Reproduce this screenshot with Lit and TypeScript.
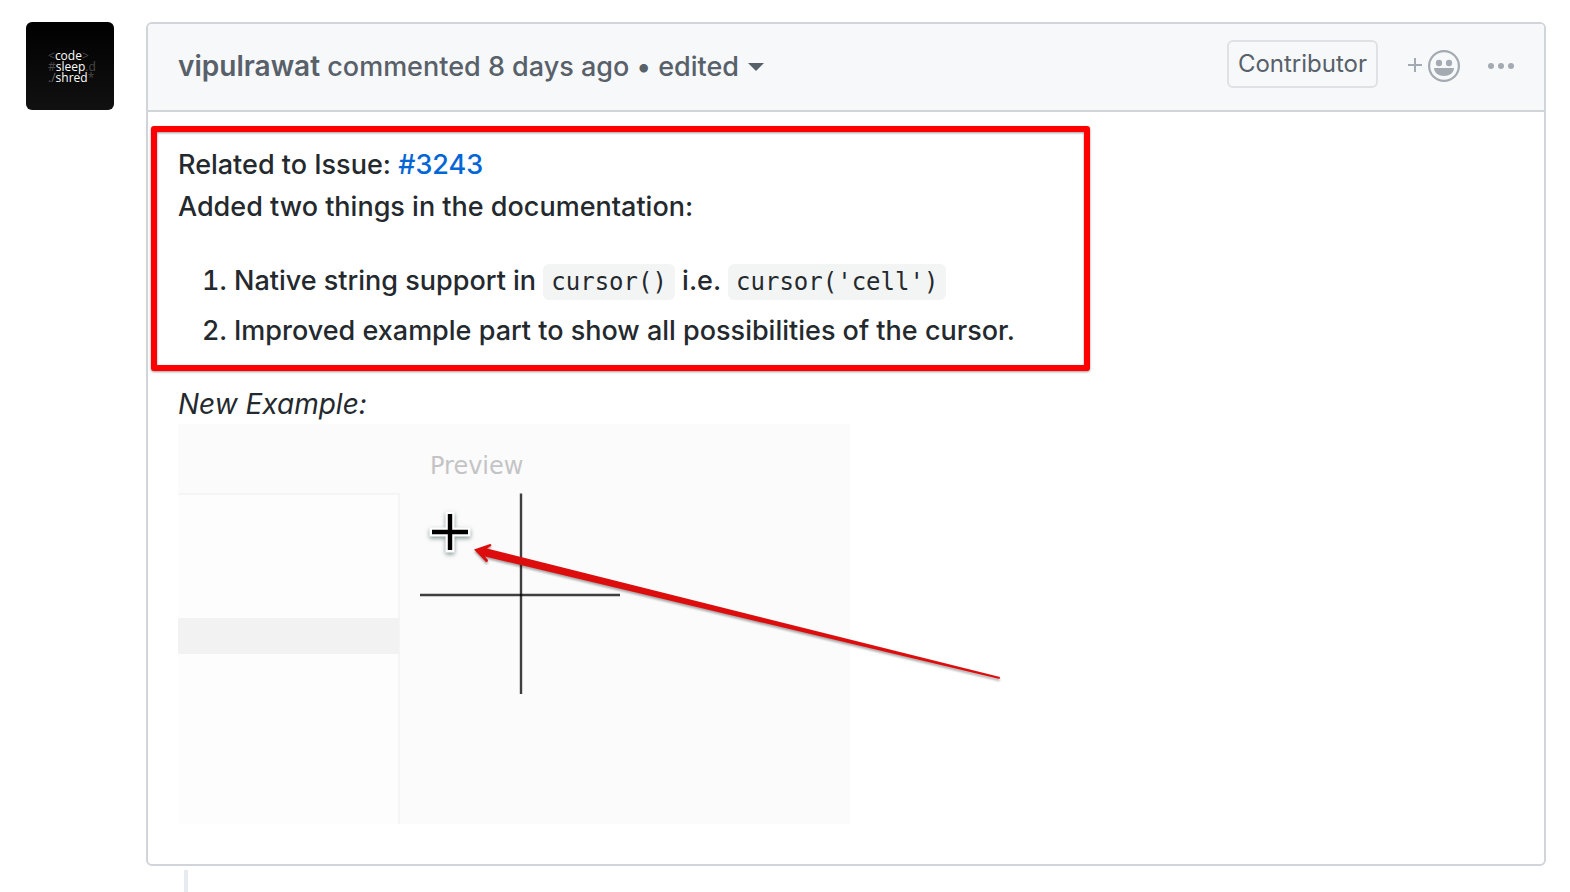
import { LitElement, html, css } from "lit";
import { customElement } from "lit/decorators.js";

@customElement("user-avatar")
class UserAvatar extends LitElement {
  static styles = css`
    :host {
      display: block;
      flex: none;
    }
    .tile {
      display: flex;
      flex-direction: column;
      justify-content: center;
      box-sizing: border-box;
      width: 88px;
      height: 88px;
      padding-left: 22px;
      border-radius: 6px;
      background: linear-gradient(#000, #111);
      color: #fff;
      font: 12px/11px "Open Sans", "Noto Sans", sans-serif;
      text-decoration: none;
      white-space: nowrap;
    }
    .dim {
      color: #484848;
    }
    .slash {
      color: #666;
    }
  `;

  render() {
    return html`
      <a class="tile" href="#vipulrawat" aria-label="vipulrawat">
        <span><span class="dim">&lt;</span>code<span class="dim">&gt;</span></span>
        <span><span class="dim">#</span>sleep<span class="dim">.d</span></span>
        <span><span class="slash">./</span>shred<span class="dim">*</span></span>
      </a>
    `;
  }
}

@customElement("cursor-preview")
class CursorPreview extends LitElement {
  static styles = css`
    :host {
      display: block;
      position: relative;
      max-width: 672px;
    }
    .picture {
      display: block;
      width: 100%;
    }
    .label {
      font: 24px "DejaVu Sans", sans-serif;
      fill: #c4c4c6;
    }
    .arrow {
      position: absolute;
      top: 0;
      left: 0;
      width: 100%;
      height: 100%;
      overflow: visible;
      pointer-events: none;
      filter: drop-shadow(0 2px 1px rgba(0, 0, 0, 0.35));
    }
    .pointer {
      filter: drop-shadow(0 2px 2px rgba(60, 90, 90, 0.6));
    }
  `;

  render() {
    return html`
      <svg class="picture" viewBox="0 0 672 400" role="img" aria-label="Cursor example preview">
        <rect width="672" height="400" fill="#fbfbfb" />
        <rect y="69" width="222" height="331" fill="#f5f5f5" />
        <rect y="71" width="220" height="329" fill="#fdfdfd" />
        <rect y="194" width="221" height="36" fill="#f2f2f2" />
        <text class="label" x="252" y="50">Preview</text>
        <g stroke="#000" stroke-opacity="0.75" stroke-width="2.4">
          <path d="M343 69.5V270" />
          <path d="M242 171H442" />
        </g>
        <g class="pointer">
          <path d="M272 87.5V128.5M251.5 108H292.5" stroke="#fff" stroke-width="9" />
          <path d="M272 90V126M254 108H290" stroke="#000" stroke-width="4.4" />
        </g>
      </svg>
      <svg class="arrow" viewBox="0 0 672 400" aria-hidden="true">
        <path
          d="M296 125.5 312 120Q314 120 313 122L309 124.5 822 253 821.5 255 307 132.5 310 136Q310 138.5 308 138Z"
          fill="#de0d0d"
        />
      </svg>
    `;
  }
}

@customElement("app-root")
class AppRoot extends LitElement {
  static styles = css`
    :host {
      display: flex;
      flex-direction: column;
      box-sizing: border-box;
      min-height: 100vh;
      padding: 22px 24px 0 26px;
      background: #fff;
      color: #24292e;
      font: 450 27px/42px "Inter", sans-serif;
    }
    a {
      color: #0366d6;
      text-decoration: none;
    }
    button {
      display: inline-flex;
      align-items: center;
      padding: 0;
      border: 0;
      background: none;
      color: inherit;
      font: inherit;
      cursor: pointer;
    }
    .row {
      display: flex;
      align-items: flex-start;
      gap: 32px;
    }
    .comment {
      flex: 1;
      min-width: 0;
      border: 2px solid #d1d5da;
      border-radius: 6px;
    }
    .header {
      display: flex;
      align-items: center;
      box-sizing: border-box;
      min-height: 88px;
      padding: 0 30px 2px;
      border-bottom: 2px solid #d1d5da;
      border-radius: 4px 4px 0 0;
      background: #f6f8fa;
      color: #586069;
    }
    .title {
      flex: 1;
      margin: 0;
      font-size: inherit;
      font-weight: inherit;
    }
    .author {
      color: #586069;
      font-size: 28px;
      font-weight: 600;
    }
    .edited {
      gap: 9px;
    }
    .role {
      margin: 0 30px 4px 0;
      padding: 0 9px;
      border: 2px solid rgba(27, 31, 35, 0.1);
      border-radius: 6px;
      font-size: 24px;
      font-weight: 400;
      line-height: 44px;
    }
    .tool {
      color: #a3aab1;
    }
    .more {
      margin-left: 28px;
    }
    .body {
      padding: 32px 30px 40px;
    }
    .marked {
      position: relative;
    }
    .frame {
      position: absolute;
      top: -18px;
      left: -27px;
      box-sizing: border-box;
      width: 939px;
      height: 245px;
      border: 6px solid #f00;
      border-radius: 3px;
      filter: drop-shadow(0 1px 1px rgba(0, 0, 0, 0.4));
      pointer-events: none;
    }
    p {
      margin: 0;
    }
    .caption {
      font-size: 28px;
      font-weight: 400;
      line-height: 40px;
    }
    ol {
      margin: 32px 0;
      padding-left: 56px;
    }
    li + li {
      margin-top: 8px;
    }
    code {
      padding: 4px 8px;
      border-radius: 6px;
      background: #f3f4f4;
      font: 24px/28px "DejaVu Sans Mono", monospace;
    }
    .rail {
      flex: 1;
      min-height: 22px;
      margin: 4px 0 0 158px;
      border-left: 4px solid #e6ebf1;
    }
  `;

  render() {
    return html`
      <div class="row">
        <user-avatar></user-avatar>
        <article class="comment">
          <header class="header">
            <h3 class="title">
              <a class="author" href="#vipulrawat">vipulrawat</a> commented 8 days ago •
              <button class="edited" type="button">
                edited
                <svg width="16" height="8" viewBox="0 0 16 8" aria-hidden="true">
                  <path d="M0 0H16L8 8Z" fill="currentColor" />
                </svg>
              </button>
            </h3>
            <span class="role">Contributor</span>
            <button class="tool" type="button" aria-label="Add your reaction">
              <svg width="52" height="32" viewBox="0 0 52 32" fill="currentColor" aria-hidden="true">
                <path d="M6 8H8V14H14V16H8V22H6V16H0V14H6Z" />
                <circle cx="36" cy="16" r="14.9" fill="none" stroke="currentColor" stroke-width="2.2" />
                <ellipse cx="31" cy="13" rx="3.1" ry="3.2" />
                <ellipse cx="41" cy="13" rx="3.1" ry="3.2" />
                <path d="M26 18H46C46 23 41 26 36 26S26 23 26 18Z" />
              </svg>
            </button>
            <button class="tool more" type="button" aria-label="Show options">
              <svg width="26" height="6" viewBox="0 0 26 6" fill="currentColor" aria-hidden="true">
                <circle cx="3" cy="3" r="3" />
                <circle cx="13" cy="3" r="3" />
                <circle cx="23" cy="3" r="3" />
              </svg>
            </button>
          </header>
          <div class="body">
            <div class="marked">
              <p>Related to Issue: <a href="#3243">#3243</a><br />Added two things in the documentation:</p>
              <ol>
                <li>Native string support in <code>cursor()</code> i.e. <code>cursor('cell')</code></li>
                <li>Improved example part to show all possibilities of the cursor.</li>
              </ol>
              <div class="frame"></div>
            </div>
            <p class="caption"><em>New Example:</em></p>
            <cursor-preview></cursor-preview>
          </div>
        </article>
      </div>
      <div class="rail"></div>
    `;
  }
}
